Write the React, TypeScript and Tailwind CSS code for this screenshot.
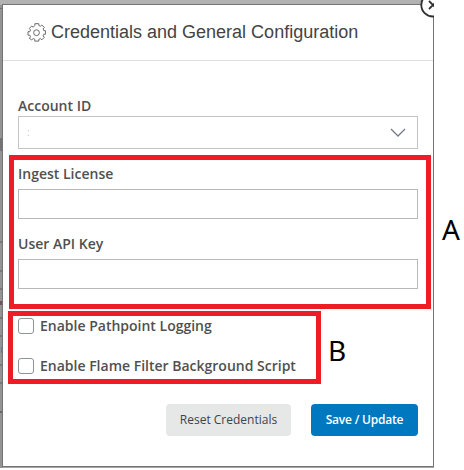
import React from "react";

function Gear() {
  return (
    <svg className="block h-[19px] w-[19px]" viewBox="0 0 19 19" fill="none" stroke="#6b6b6b" strokeWidth="1">
      <path d="M7.5 2.5V.7h4v1.8l1.6.7 1.4-1.2 2.5 2.5-1.2 1.4.7 1.8h1.8v3.5h-1.8l-.7 1.7 1.2 1.5-2.4 2.4-1.5-1.2-1.6.7v1.8h-4v-1.8l-1.6-.7-1.5 1.2L2 15.4l1.2-1.5-.7-1.7H.7V8.7h1.8l.7-1.8L2 5.5 4.4 3l1.5 1.2z" transform="translate(0.3 0)" strokeLinejoin="round" />
      <circle cx="9.5" cy="9.7" r="2.9" />
    </svg>
  );
}

const label = "block whitespace-nowrap text-[14px] font-semibold leading-[18px] text-[#505050]";

function Field({ name, children }: { name: string; children: React.ReactNode }) {
  return (
    <div className="flex flex-col">
      <span className={label}>{name}</span>
      {children}
    </div>
  );
}

function Check({ name }: { name: string }) {
  return (
    <label className="flex h-4 items-center gap-1.5">
      <span className="h-4 w-4 shrink-0 rounded-[3px] border border-[#8e9494] bg-white" />
      <span className={label}>{name}</span>
    </label>
  );
}

export default function App() {
  return (
    <div className="relative h-[470px] w-[464px] overflow-hidden bg-white font-['Open_Sans','Noto_Sans',sans-serif]">
      <div className="relative h-[468px] w-[434px] overflow-hidden bg-[#a5a5a5] pl-[3px] pt-[5px]">
        {/* Dimmed page lines behind the dialog */}
        <div className="absolute left-0 top-0 h-[468px] w-[3px] bg-[#949494]">
          <i className="absolute top-2 h-px w-full bg-[#707070]" />
          <i className="absolute top-[138px] h-[13px] w-full bg-[#747474]" />
          <i className="absolute top-[241px] h-0.5 w-full bg-[#777]" />
          <i className="absolute top-[270px] h-0.5 w-full bg-[#777]" />
          <i className="absolute top-[288px] h-0.5 w-full bg-[#777]" />
          <i className="absolute top-[301px] h-1 w-0.5 bg-[#75515a]" />
          <i className="absolute top-[317px] h-0.5 w-full bg-[#777]" />
          <i className="absolute top-[335px] h-0.5 w-full bg-[#777]" />
          <i className="absolute left-px top-[347px] h-1.5 w-px bg-[#647f91]" />
          <i className="absolute top-[364px] h-0.5 w-full bg-[#777]" />
          <i className="absolute top-[382px] h-0.5 w-full bg-[#777]" />
          <i className="absolute top-[411px] h-0.5 w-full bg-[#696969]" />
        </div>
        <div className="absolute left-0 top-0 h-[5px] w-full bg-[#b2b2b2]" />
        <section className="relative flex h-[461px] w-[430px] flex-col bg-white shadow-[0_0_0_1px_#747474]">
          <header className="flex h-14 items-center gap-[5px] border-b border-[#dedede] pl-6">
            <Gear />
            <h1 className="whitespace-nowrap pb-0.5 font-['Liberation_Sans',Arial,sans-serif] text-[18px] leading-6 text-[#434343]">Credentials and General Configuration</h1>
          </header>
          <div className="flex flex-col px-[15px] pt-9">
            <Field name="Account ID">
              <div className="mt-px flex h-[33px] items-center justify-between border border-[#c4c4c4] pl-2 pr-[11px]">
                <span className="text-[10px] text-[#c9c9c9]">:</span>
                <svg className="h-[9px] w-4" viewBox="0 0 16 9" fill="none" stroke="#737994" strokeWidth="1.3">
                  <path d="m1 1 7 7 7-7" />
                </svg>
              </div>
            </Field>
            <div className="mt-4">
              <Field name="Ingest License"><input className="mt-1.5 block h-[30px] w-full border border-[#b8b8b8]" /></Field>
            </div>
            <div className="mt-4">
              <Field name="User API Key"><input className="mt-1.5 block h-[30px] w-full border border-[#b8b8b8]" /></Field>
            </div>
            <div className="mt-[29px] flex flex-col gap-6">
              <Check name="Enable Pathpoint Logging" />
              <Check name="Enable Flame Filter Background Script" />
            </div>
            <div className="mt-[30px] flex justify-end gap-5">
              <button className="h-8 w-[125px] whitespace-nowrap rounded bg-[#e5e8e7] text-[12px] text-[#3c444a]">Reset Credentials</button>
              <button className="h-8 w-[107px] whitespace-nowrap rounded bg-[#0078bf] text-[12px] font-semibold tracking-[-0.2px] text-white">Save / Update</button>
            </div>
          </div>
        </section>
        <svg className="absolute right-0 top-0 h-[18px] w-[14px]" viewBox="0 0 14 18" fill="none">
          <circle cx="12.8" cy="5" r="11.5" fill="white" stroke="#303030" strokeWidth="1.8" />
          <path d="m9 1 8 8M9 9l8-8" stroke="#303030" strokeWidth="1.8" />
        </svg>
      </div>

      {/* Callouts over the dialog */}
      <div className="absolute left-[9px] top-[155px] h-[154px] w-[422px] border-[5px] border-[#ee1c25]" />
      <div className="absolute left-2 top-[311px] h-[73px] w-[313px] border-[5px] border-[#ee1c25]" />
      <span className="absolute left-[442px] top-[213px] font-['Noto_Sans',sans-serif] text-[28px] leading-8 text-black">A</span>
      <span className="absolute left-[328px] top-[334px] font-['Noto_Sans',sans-serif] text-[28px] leading-8 text-black">B</span>
    </div>
  );
}
